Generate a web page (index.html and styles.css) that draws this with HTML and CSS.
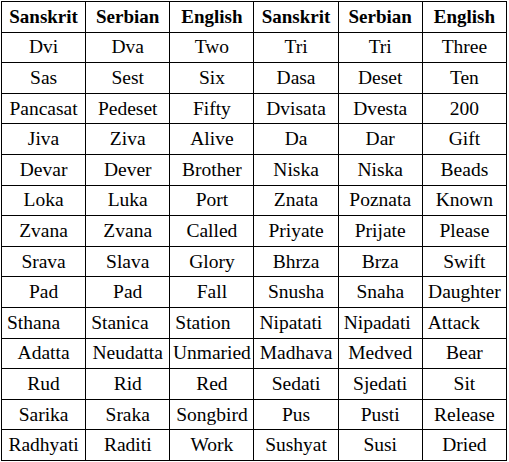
FILE: index.html
```html
<!DOCTYPE html>
<html>
<head>
<meta charset="utf-8">
<link rel="stylesheet" href="styles.css">
</head>
<body>
<table class="vocab">
<thead>
<tr><th>Sanskrit</th><th>Serbian</th><th>English</th><th>Sanskrit</th><th>Serbian</th><th>English</th></tr>
</thead>
<tbody>
<tr><td>Dvi</td><td>Dva</td><td>Two</td><td>Tri</td><td>Tri</td><td>Three</td></tr>
<tr><td>Sas</td><td>Sest</td><td>Six</td><td>Dasa</td><td>Deset</td><td>Ten</td></tr>
<tr><td>Pancasat</td><td>Pedeset</td><td>Fifty</td><td>Dvisata</td><td>Dvesta</td><td>200</td></tr>
<tr><td>Jiva</td><td>Ziva</td><td>Alive</td><td>Da</td><td>Dar</td><td>Gift</td></tr>
<tr><td>Devar</td><td>Dever</td><td>Brother</td><td>Niska</td><td>Niska</td><td>Beads</td></tr>
<tr><td>Loka</td><td>Luka</td><td>Port</td><td>Znata</td><td>Poznata</td><td>Known</td></tr>
<tr><td>Zvana</td><td>Zvana</td><td>Called</td><td>Priyate</td><td>Prijate</td><td>Please</td></tr>
<tr><td>Srava</td><td>Slava</td><td>Glory</td><td>Bhrza</td><td>Brza</td><td>Swift</td></tr>
<tr><td>Pad</td><td>Pad</td><td>Fall</td><td>Snusha</td><td>Snaha</td><td>Daughter</td></tr>
<tr class="left"><td>Sthana</td><td>Stanica</td><td>Station</td><td>Nipatati</td><td>Nipadati</td><td>Attack</td></tr>
<tr><td>Adatta</td><td>Neudatta</td><td>Unmaried</td><td>Madhava</td><td>Medved</td><td>Bear</td></tr>
<tr><td>Rud</td><td>Rid</td><td>Red</td><td>Sedati</td><td>Sjedati</td><td>Sit</td></tr>
<tr><td>Sarika</td><td>Sraka</td><td>Songbird</td><td>Pus</td><td>Pusti</td><td>Release</td></tr>
<tr><td>Radhyati</td><td>Raditi</td><td>Work</td><td>Sushyat</td><td>Susi</td><td>Dried</td></tr>
</tbody>
</table>
</body>
</html>
```
FILE: styles.css
```css
html, body {
  margin: 0;
  padding: 0;
  background: #fff;
}
.vocab {
  margin: 1px 0 0 1px;
  width: 506px;
  border-collapse: collapse;
  table-layout: fixed;
  font-family: "Liberation Serif", serif;
  color: #000;
}
.vocab tr {
  height: 30.6px;
}
.vocab th, .vocab td {
  border: 1px solid #000;
  padding: 0 1px;
  text-align: center;
  vertical-align: middle;
  white-space: nowrap;
  overflow: hidden;
}
.vocab th {
  font-size: 19px;
  font-weight: bold;
}
.vocab td {
  font-size: 19.5px;
}
.vocab tr.left td {
  text-align: left;
  padding-left: 5px;
}
```
